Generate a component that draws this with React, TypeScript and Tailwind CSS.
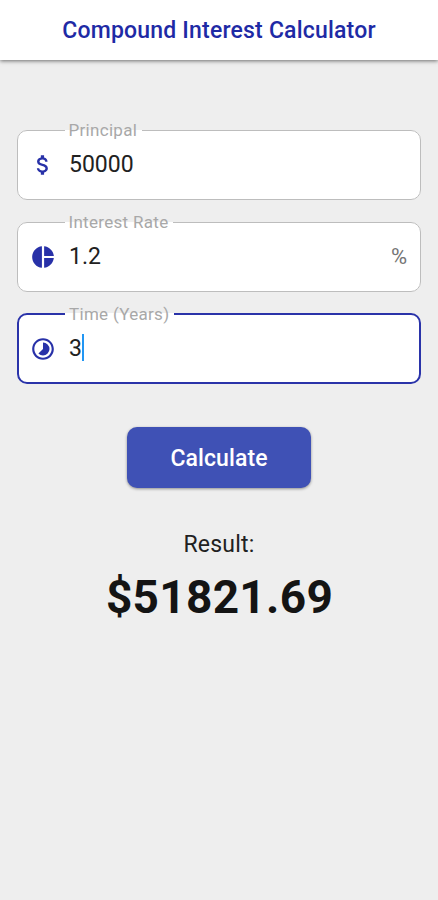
import React from 'react';
import { MdAttachMoney, MdPieChart, MdTimelapse } from 'react-icons/md';

interface FieldProps {
  label: string;
  value: string;
  icon: React.ReactNode;
  suffix?: string;
  focused?: boolean;
}

const Field: React.FC<FieldProps> = ({ label, value, icon, suffix, focused }) => {
  return (
    <fieldset
      className={`h-[80px] min-w-0 rounded-[10px] bg-white ${
        focused ? 'border-2 border-[#2a33a9]' : 'border-[1.5px] border-[#bdbdbd]'
      }`}
    >
      <legend
        className={`h-5 pl-1 pr-[5px] text-[17px] leading-5 tracking-[0.3px] text-[#a8a8a8] ${
          focused ? 'ml-[46px]' : 'ml-[46.5px]'
        }`}
      >
        {label}
      </legend>
      <div className={`flex h-[47px] items-center pr-[13px] ${focused ? 'pl-[11px]' : 'pl-3'}`}>
        <span className="mt-[3px] flex w-[39px] text-[26px] text-[#2831a8]">{icon}</span>
        <span className="mt-0.5 text-[23px] leading-7 text-[#212121]">{value}</span>
        {focused && <span className="h-[27px] w-0.5 bg-[#2196f3]" />}
        {suffix && (
          <span className="ml-auto mt-0.5 text-[22px] leading-7 text-[#757575]">{suffix}</span>
        )}
      </div>
    </fieldset>
  );
};

const App: React.FC = () => {
  return (
    <div className="min-h-screen bg-[#eeeeee] font-['Roboto',sans-serif]">
      <header className="flex h-[60px] items-center justify-center bg-white pt-0.5 shadow-[0_1px_4px_rgba(0,0,0,0.55)]">
        <h1 className="text-[23px] font-medium tracking-[0.2px] text-[#1e2aa5]">
          Compound Interest Calculator
        </h1>
      </header>

      <main className="flex flex-col items-center px-[17px] pt-[60px]">
        <div className="flex w-full flex-col gap-3">
          <Field label="Principal" value="50000" icon={<MdAttachMoney />} />
          <Field label="Interest Rate" value="1.2" icon={<MdPieChart />} suffix="%" />
          <Field label="Time (Years)" value="3" icon={<MdTimelapse />} focused />
        </div>

        <button className="mt-[43px] h-[61px] w-[184px] rounded-[10px] bg-[#3f51b5] pt-[3px] text-[23px] font-medium tracking-[0.1px] text-white shadow-[0_1px_3px_rgba(0,0,0,0.4)]">
          Calculate
        </button>

        <p className="mt-[41px] text-[23px] leading-8 tracking-[0.2px] text-[#212121]">Result:</p>
        <p className="mt-2 pl-px text-[46px] font-bold leading-[56px] tracking-[0.3px] text-[#141414]">
          $51821.69
        </p>
      </main>
    </div>
  );
};

export default App;
